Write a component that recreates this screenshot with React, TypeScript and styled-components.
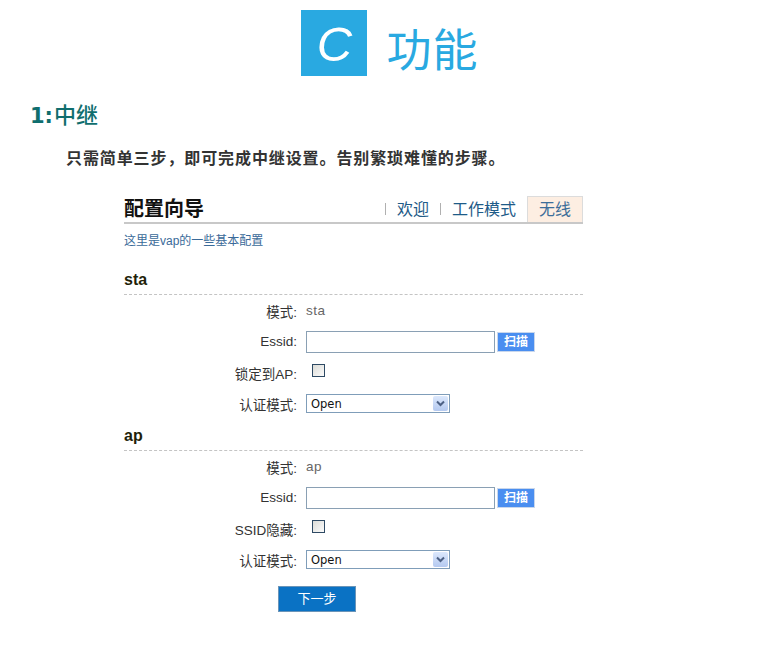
import * as React from 'react';
import styled, { createGlobalStyle } from 'styled-components';

const GlobalStyle = createGlobalStyle`
  body {
    margin: 0;
    background: #fff;
    font-family: "Liberation Sans", "Noto Sans CJK SC", sans-serif;
  }
`;

const CJK = `"Liberation Sans", "Noto Sans CJK SC", sans-serif`;

interface FieldProps {
  label: string;
  children: React.ReactNode;
}

const Field: React.FC<FieldProps> = ({ label, children }) => (
  <Row>
    <Label>{label}:</Label>
    <Value>{children}</Value>
  </Row>
);

const Select: React.FC<{ value: string }> = ({ value }) => (
  <SelectBox>
    <SelectText>{value}</SelectText>
    <ArrowBox>
      <svg width="9" height="7" viewBox="0 0 9 7">
        <path d="M1 1.5 L4.5 5 L8 1.5" fill="none" stroke="#4d6185" strokeWidth="2" />
      </svg>
    </ArrowBox>
  </SelectBox>
);

const EssidInput: React.FC = () => (
  <InputGroup>
    <TextInput />
    <ScanButton>扫描</ScanButton>
  </InputGroup>
);

const App: React.FC = () => (
  <Page>
    <GlobalStyle />
    <Banner>
      <LogoBox>C</LogoBox>
      <BannerTitle>功能</BannerTitle>
    </Banner>

    <SectionTitle>
      <b>1:</b>中继
    </SectionTitle>
    <Intro>只需简单三步，即可完成中继设置。告别繁琐难懂的步骤。</Intro>

    <Panel>
      <PanelHead>
        <PanelTitle>配置向导</PanelTitle>
        <Tabs>
          <Sep />
          <Tab>欢迎</Tab>
          <Sep />
          <Tab>工作模式</Tab>
          <Tab active>无线</Tab>
        </Tabs>
      </PanelHead>
      <Hint>这里是vap的一些基本配置</Hint>

      <GroupHead>sta</GroupHead>
      <Field label="模式">
        <Plain>sta</Plain>
      </Field>
      <Field label="Essid">
        <EssidInput />
      </Field>
      <Field label="锁定到AP">
        <Check />
      </Field>
      <Field label="认证模式">
        <Select value="Open" />
      </Field>

      <GroupHead gap>ap</GroupHead>
      <Field label="模式">
        <Plain>ap</Plain>
      </Field>
      <Field label="Essid">
        <EssidInput />
      </Field>
      <Field label="SSID隐藏">
        <Check />
      </Field>
      <Field label="认证模式">
        <Select value="Open" />
      </Field>

      <Footer>
        <NextButton>下一步</NextButton>
      </Footer>
    </Panel>
  </Page>
);

export default App;

const Page = styled.div`
  width: 778px;
  height: 648px;
  overflow: hidden;
  font-family: ${CJK};
`;

const Banner = styled.div`
  display: flex;
  justify-content: center;
  align-items: flex-start;
  gap: 19px;
  padding-top: 10px;
  padding-left: 2px;
`;

const LogoBox = styled.div`
  width: 66px;
  height: 66px;
  background: #29a9e1;
  color: #fff;
  display: flex;
  align-items: center;
  justify-content: center;
  font-family: "Liberation Sans", sans-serif;
  font-style: italic;
  font-size: 49px;
  line-height: 1;
  padding-top: 2px;
  box-sizing: border-box;
`;

const BannerTitle = styled.div`
  color: #29a9e1;
  font-size: 45px;
  line-height: 66px;
  padding-top: 9px;
  letter-spacing: 1px;
`;

const SectionTitle = styled.div`
  margin: 17px 0 0 30px;
  color: #0f6e6e;
  font-size: 22px;
  line-height: 28px;
  font-weight: 500;

  b {
    font-family: "DejaVu Sans", sans-serif;
    font-size: 21px;
    margin-right: 1px;
  }
`;

const Intro = styled.div`
  margin: 19px 0 0 66px;
  color: #333;
  font-size: 16px;
  line-height: 20px;
  font-weight: bold;
  letter-spacing: 0.9px;
`;

const Panel = styled.div`
  margin: 27px 0 0 124px;
  width: 459px;
`;

const PanelHead = styled.div`
  display: flex;
  justify-content: space-between;
  align-items: flex-end;
  height: 26px;
  border-bottom: 2px solid #c8c8c8;
`;

const PanelTitle = styled.div`
  font-size: 20px;
  font-weight: bold;
  color: #111;
  line-height: 26px;
`;

const Tabs = styled.div`
  display: flex;
  align-items: center;
  height: 26px;
`;

const Sep = styled.span`
  width: 1px;
  height: 12px;
  background: #b0b0b0;
  margin: 0 11px;
`;

const Tab = styled.span<{ active?: boolean }>`
  font-size: 16px;
  line-height: 25px;
  color: ${(p) => (p.active ? '#3c6d99' : '#1e5b88')};
  padding: ${(p) => (p.active ? '0 11px' : '0')};
  margin-left: ${(p) => (p.active ? '11px' : '0')};
  background: ${(p) => (p.active ? '#fdeee2' : 'transparent')};
  border: ${(p) => (p.active ? '1px solid #dcdcdc' : 'none')};
  border-bottom: none;
  height: ${(p) => (p.active ? '25px' : 'auto')};
  align-self: flex-end;
`;

const Hint = styled.div`
  margin-top: 9px;
  font-size: 12px;
  line-height: 16px;
  color: #3a6a99;
`;

const GroupHead = styled.div<{ gap?: boolean }>`
  margin-top: ${(p) => (p.gap ? '6px' : '20px')};
  font-size: 16px;
  font-weight: bold;
  line-height: 22px;
  color: #1f1f0a;
  padding-bottom: 3px;
  border-bottom: 1px dashed #c4c4c4;
`;

const Row = styled.div`
  display: grid;
  grid-template-columns: 173px 1fr;
  column-gap: 9px;
  align-items: center;
  height: 31px;
`;

const Label = styled.div`
  text-align: right;
  font-size: 13.5px;
  color: #333;
`;

const Value = styled.div`
  display: flex;
  align-items: center;
`;

const Plain = styled.span`
  font-size: 13.5px;
  color: #666;
  letter-spacing: 0.5px;
`;

const InputGroup = styled.div`
  display: flex;
  align-items: center;
  gap: 2px;
`;

const TextInput = styled.div`
  width: 187px;
  height: 20px;
  border: 1px solid #8aa0b4;
  background: #fff;
`;

const ScanButton = styled.div`
  width: 36px;
  height: 18px;
  border: 1px solid #c9d7ec;
  background: #4a8ef0;
  color: #fff;
  font-size: 12px;
  font-weight: bold;
  line-height: 18px;
  text-align: center;
`;

const Check = styled.span`
  width: 11px;
  height: 11px;
  margin-left: 6px;
  margin-bottom: 4px;
  border: 1px solid #2e4a64;
  background: linear-gradient(135deg, #dcdcd7, #fbfbfb);
`;

const SelectBox = styled.div`
  width: 142px;
  height: 17px;
  border: 1px solid #7f9db9;
  display: flex;
  align-items: center;
  justify-content: space-between;
  background: #fff;
`;

const SelectText = styled.span`
  font-family: "DejaVu Sans", sans-serif;
  font-size: 11.5px;
  color: #111;
  padding-left: 4px;
`;

const ArrowBox = styled.span`
  width: 15px;
  height: 15px;
  margin-right: 1px;
  display: flex;
  align-items: center;
  justify-content: center;
  background: linear-gradient(#dce8fc, #b4c9f0);
  border-radius: 2px;
`;

const Footer = styled.div`
  margin-top: 11px;
  padding-left: 154px;
`;

const NextButton = styled.div`
  width: 76px;
  height: 24px;
  border: 1px solid #6a94b8;
  background: #0a72c4;
  color: #fff;
  font-size: 13px;
  line-height: 24px;
  text-align: center;
`;
